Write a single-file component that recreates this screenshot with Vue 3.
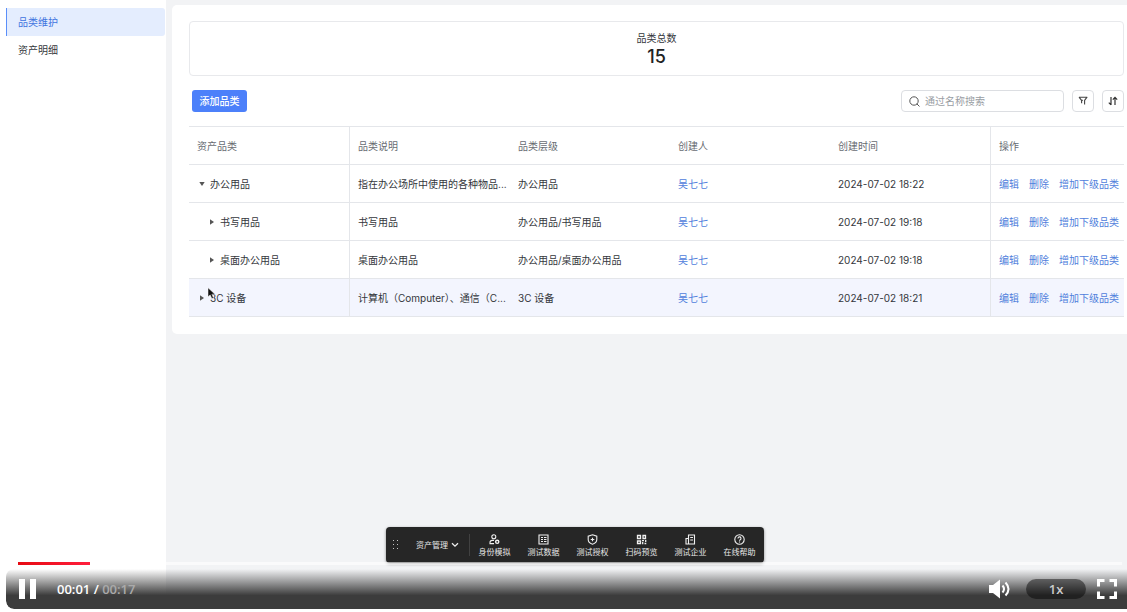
<script setup>
import { ref, computed } from 'vue'

const menu = ['品类维护', '资产明细']
const columns = ['资产品类', '品类说明', '品类层级', '创建人', '创建时间']
const rows = [
  { name: '办公用品', level: 0, open: true, desc: '指在办公场所中使用的各种物品...', path: '办公用品', time: '2024-07-02 18:22' },
  { name: '书写用品', level: 1, open: false, desc: '书写用品', path: '办公用品/书写用品', time: '2024-07-02 19:18' },
  { name: '桌面办公用品', level: 1, open: false, desc: '桌面办公用品', path: '办公用品/桌面办公用品', time: '2024-07-02 19:18' },
  { name: '3C 设备', level: 0, open: false, hover: true, desc: '计算机（Computer）、通信（C...', path: '3C 设备', time: '2024-07-02 18:21' },
]
const actions = ['编辑', '删除', '增加下级品类']
const tools = [
  { label: '身份模拟', icon: 'user' },
  { label: '测试数据', icon: 'table' },
  { label: '测试授权', icon: 'shield' },
  { label: '扫码预览', icon: 'qr' },
  { label: '测试企业', icon: 'building' },
  { label: '在线帮助', icon: 'help' },
]
const keyword = ref('')
const duration = 17
const position = ref(1.11)
const played = computed(() => (position.value / duration) * 100 + '%')
</script>

<template>
  <div class="player">
    <nav class="side">
      <a v-for="(item, i) in menu" :key="item" href="#" class="side-item" :class="{ active: i === 0 }">{{ item }}</a>
    </nav>

    <main class="main">
      <section class="card">
        <div class="stat">
          <span class="stat-label">品类总数</span>
          <strong class="stat-value">15</strong>
        </div>

        <div class="bar">
          <button class="add" type="button">添加品类</button>
          <label class="search">
            <svg width="11" height="11" viewBox="0 0 11 11" fill="none" stroke="#555" stroke-width="1">
              <circle cx="5" cy="5" r="4.2" />
              <path d="M8.1 8.1l2.1 2.1" stroke-linecap="round" />
            </svg>
            <input v-model="keyword" type="text" placeholder="通过名称搜索" aria-label="通过名称搜索" />
          </label>
          <button class="square" type="button" aria-label="筛选">
            <svg width="10" height="10" viewBox="0 0 10 10" fill="none" stroke="#444" stroke-width="1.1" stroke-linejoin="round">
              <path d="M1 1.2h8L6.6 4.4v4.2M1 1.2l2.600 3.200v2.800M3.600 4.400h1.200" />
            </svg>
          </button>
          <button class="square" type="button" aria-label="排序">
            <svg width="10" height="10" viewBox="0 0 10 10" fill="none" stroke="#333" stroke-width="1.2">
              <path d="M3 1v8M.8 6.600L3 8.800M7 9V1M4.800 3.600L7 1.400l2.200 2.200" />
            </svg>
          </button>
        </div>

        <table class="grid">
          <thead>
            <tr>
              <th v-for="c in columns" :key="c">{{ c }}</th>
              <th class="ops">操作</th>
            </tr>
          </thead>
          <tbody>
            <tr v-for="r in rows" :key="r.name" :class="{ hover: r.hover }">
              <td>
                <div class="tree" :class="{ child: r.level === 1 }">
                  <button type="button" class="toggle" :aria-expanded="r.open" :aria-label="r.name">
                    <svg width="6" height="6" viewBox="0 0 6 6" fill="#555">
                      <path v-if="r.open" d="M0.3 1h5.4L3 5z" />
                      <path v-else d="M1 0.3v5.4L5 3z" />
                    </svg>
                  </button>
                  <span>{{ r.name }}</span>
                </div>
              </td>
              <td>{{ r.desc }}</td>
              <td>{{ r.path }}</td>
              <td><a href="#">吴七七</a></td>
              <td>{{ r.time }}</td>
              <td class="ops">
                <div class="links"><a v-for="a in actions" :key="a" href="#">{{ a }}</a></div>
              </td>
            </tr>
          </tbody>
        </table>
      </section>
    </main>

    <svg class="cursor" width="9" height="13" viewBox="0 0 9 13">
      <path d="M1 0.8v9l2.2-1.9 1.6 3.7 1.7-.7-1.6-3.6 2.9-.3z" fill="#111" stroke="#fff" stroke-width=".5" />
    </svg>

    <div class="dock">
      <svg width="6" height="10" viewBox="0 0 6 10" fill="#c4c4c4">
        <path d="M0 0h1v1H0zM4 0h1v1H4zM0 4h1v1H0zM4 4h1v1H4zM0 8h1v1H0zM4 8h1v1H4z" />
      </svg>
      <button type="button" class="app">
        资产管理
        <svg width="8" height="6" viewBox="0 0 8 6" fill="none" stroke="#eee" stroke-width="1.3"><path d="M1 1.2l3 3 3-3" /></svg>
      </button>
      <span class="divider"></span>
      <div class="tools">
        <button v-for="t in tools" :key="t.label" type="button" class="tool">
          <svg width="11" height="11" viewBox="0 0 11 11" fill="none" stroke="#f0f0f0" stroke-width="1.1">
            <template v-if="t.icon === 'user'">
              <circle cx="4.8" cy="2.8" r="2" />
              <path d="M5 6.4H3.2C1.8 6.4 1 7.5 1 8.7V9.6H5" />
              <circle cx="8.2" cy="7.8" r="1.6" stroke-width="1.4" />
            </template>
            <template v-else-if="t.icon === 'table'">
              <path d="M1 1h9v9H1zM3 3.5h2M6 3.5h2.5M3 5.5h2M6 5.5h2.5M3 7.5h2M6 7.5h2.5" />
            </template>
            <template v-else-if="t.icon === 'shield'">
              <path d="M5.5.8L9.8 2.2V5.6C9.8 8 7.5 9.7 5.5 10.3 3.5 9.7 1.2 8 1.2 5.6V2.2z" />
              <path d="M5.5 3.7v3.6M3.7 5.5h3.6" />
            </template>
            <template v-else-if="t.icon === 'qr'">
              <path d="M1.5 1.5h3v3h-3zM7 1.5h2.500v3H7zM1.5 7h3v2.500h-3z" stroke-width="1.3" />
              <path d="M6 6.700h2M9.700 6v2M6.700 8v2.300M8.500 9.500h1.800" stroke-width="1.3" />
            </template>
            <template v-else-if="t.icon === 'building'">
              <path d="M3.5 1h6v9h-6zM3.5 4.500H1V10h2.500M5.200 3.500H8M5.200 6H8" />
            </template>
            <template v-else>
              <circle cx="5.5" cy="5.5" r="4.7" />
              <path d="M4 4.4a1.5 1.5 0 1 1 2.2 1.3c-.5.3-.7.5-.7 1M5.5 7.4v1" />
            </template>
          </svg>
          <span>{{ t.label }}</span>
        </button>
      </div>
    </div>

    <input v-model.number="position" class="seek" type="range" min="0" :max="duration" step="0.01" aria-label="播放进度" :style="{ '--played': played }" />

    <div class="controls">
      <button type="button" aria-label="暂停">
        <svg width="18" height="20" viewBox="0 0 18 20" fill="#fff"><path d="M0 0h6v20H0zM11 0h6v20h-6z" /></svg>
      </button>
      <div class="clock">00:01 / <span>00:17</span></div>
      <button type="button" aria-label="音量">
        <svg width="22" height="20" viewBox="0 0 22 20">
          <path d="M0 6h4l7-5.5v19L4 14H0z" fill="#fff" />
          <path d="M13.5 6.5q3 3.5 0 7M16.5 3.5q6 6.5 0 13" fill="none" stroke="#fff" stroke-width="2" />
        </svg>
      </button>
      <button type="button" class="rate">1x</button>
      <button type="button" aria-label="全屏">
        <svg width="20" height="20" viewBox="0 0 20 20" fill="none" stroke="#fff" stroke-width="3">
          <path d="M1.5 7.5v-6h6M12.5 1.5h6v6M18.5 12.5v6h-6M7.5 18.5h-6v-6" />
        </svg>
      </button>
    </div>
  </div>
</template>

<style>
body {
  background: #fff;
}
</style>

<style scoped>
.player {
  position: relative;
  display: grid;
  grid-template-columns: 160px 1fr;
  box-sizing: border-box;
  min-height: calc(100vh - 3px);
  margin-left: 6px;
  overflow: hidden;
  border-radius: 0 0 0 8px;
  font-family: Inter, "Noto Sans CJK SC", sans-serif;
  font-size: 10px;
  line-height: 14px;
  color: #34373c;
}
button,
input {
  font: inherit;
  color: inherit;
  margin: 0;
  padding: 0;
  border: 0;
  background: none;
}
a {
  color: #4f80dc;
  text-decoration: none;
}
svg {
  display: block;
  flex: none;
}
.side {
  padding-top: 8px;
  background: #fff;
}
.side-item {
  display: flex;
  align-items: center;
  height: 28px;
  margin-right: 1px;
  padding-left: 11px;
  border-left: 1px solid transparent;
  border-radius: 0 3px 3px 0;
  color: #34373c;
}
.side-item.active {
  border-left-color: #5b8ff9;
  background: #e4edfe;
  color: #3f74e0;
}
.main {
  padding: 5px 0 0 6px;
  background: #f2f3f5;
  min-width: 0;
}
.card {
  padding: 16px 3px 17px 17px;
  border-radius: 5px 0 0 5px;
  background: #fff;
}
.stat {
  display: flex;
  flex-direction: column;
  align-items: center;
  justify-content: center;
  gap: 2px;
  box-sizing: border-box;
  height: 55px;
  border: 1px solid #e8e9ec;
  border-radius: 4px;
}
.stat-value {
  font-size: 18px;
  font-weight: 500;
  line-height: 20px;
  color: #222;
}
.bar {
  display: flex;
  align-items: center;
  gap: 8px;
  padding: 14px 0 14px 3px;
}
.add {
  width: 55px;
  height: 22px;
  margin-right: auto;
  border-radius: 3px;
  background: #4c80fa;
  color: #fff;
  font-weight: 500;
}
.search {
  display: flex;
  align-items: center;
  gap: 5px;
  box-sizing: border-box;
  width: 163px;
  height: 22px;
  padding: 0 7px;
  border: 1px solid #dcdee2;
  border-radius: 4px;
}
.search input {
  flex: 1;
  min-width: 0;
  outline: none;
}
.search input::placeholder {
  color: #999da3;
  opacity: 1;
}
.square {
  display: flex;
  align-items: center;
  justify-content: center;
  box-sizing: border-box;
  width: 22px;
  height: 22px;
  border: 1px solid #dcdee2;
  border-radius: 4px;
}
.grid {
  width: 100%;
  table-layout: fixed;
  border-collapse: separate;
  border-spacing: 0;
  border-top: 1px solid #e4e6ea;
}
.grid th,
.grid td {
  box-sizing: border-box;
  height: 38px;
  padding: 0 0 0 8px;
  border-bottom: 1px solid #e4e6ea;
  text-align: left;
  font-weight: 400;
  white-space: nowrap;
}
.grid th {
  color: #686c72;
}
.grid th:first-child,
.grid td:first-child {
  width: 161px;
  border-right: 1px solid #e4e6ea;
}
.grid .ops {
  width: 134px;
  border-left: 1px solid #e4e6ea;
}
.grid .hover td {
  background: #f3f5fe;
}
.tree {
  display: flex;
  align-items: center;
  gap: 5px;
  padding-left: 2px;
}
.tree.child {
  padding-left: 12px;
}
.links {
  display: flex;
  gap: 10px;
}
.cursor {
  position: absolute;
  left: 201px;
  top: 287px;
}
.dock {
  position: absolute;
  left: 380px;
  bottom: 46px;
  display: flex;
  align-items: center;
  box-sizing: border-box;
  height: 36px;
  padding-left: 7px;
  border-radius: 4px;
  background: #262626;
  box-shadow: 0 1px 3px rgba(0, 0, 0, 0.45);
  color: #e6e6e6;
  font-size: 8px;
  line-height: 10px;
}
.app {
  display: flex;
  align-items: center;
  gap: 3px;
  margin-left: 17px;
  padding-right: 10px;
}
.divider {
  width: 1px;
  height: 22px;
  background: #414141;
}
.tools {
  display: flex;
}
.tool {
  display: flex;
  flex-direction: column;
  align-items: center;
  gap: 2px;
  width: 49px;
}
.seek {
  position: absolute;
  left: 12px;
  right: 5px;
  bottom: 44px;
  height: 3px;
  appearance: none;
  background: linear-gradient(90deg, #e60a12, #ff1f3d) 0 0 / var(--played) 100% no-repeat, rgba(255, 255, 255, 0.6);
}
.seek::-webkit-slider-thumb {
  appearance: none;
  width: 0;
  height: 0;
}
.controls {
  position: absolute;
  left: 0;
  right: 0;
  bottom: 0;
  display: flex;
  align-items: center;
  box-sizing: border-box;
  height: 40px;
  padding: 0 10px 0 13px;
  border-radius: 8px 0 0 8px;
  background: linear-gradient(rgba(60, 60, 60, 0), #3c3c3c 66%);
  color: #fff;
  font-family: "Open Sans", sans-serif;
  font-size: 13px;
  font-weight: 600;
  line-height: 18px;
}
.clock {
  margin-left: 20px;
  margin-right: auto;
}
.clock span {
  color: #aaa;
}
.rate {
  width: 60px;
  height: 20px;
  margin: 0 11px 0 15px;
  border-radius: 10px;
  background: rgba(0, 0, 0, 0.45);
  color: #ccc;
}
</style>
